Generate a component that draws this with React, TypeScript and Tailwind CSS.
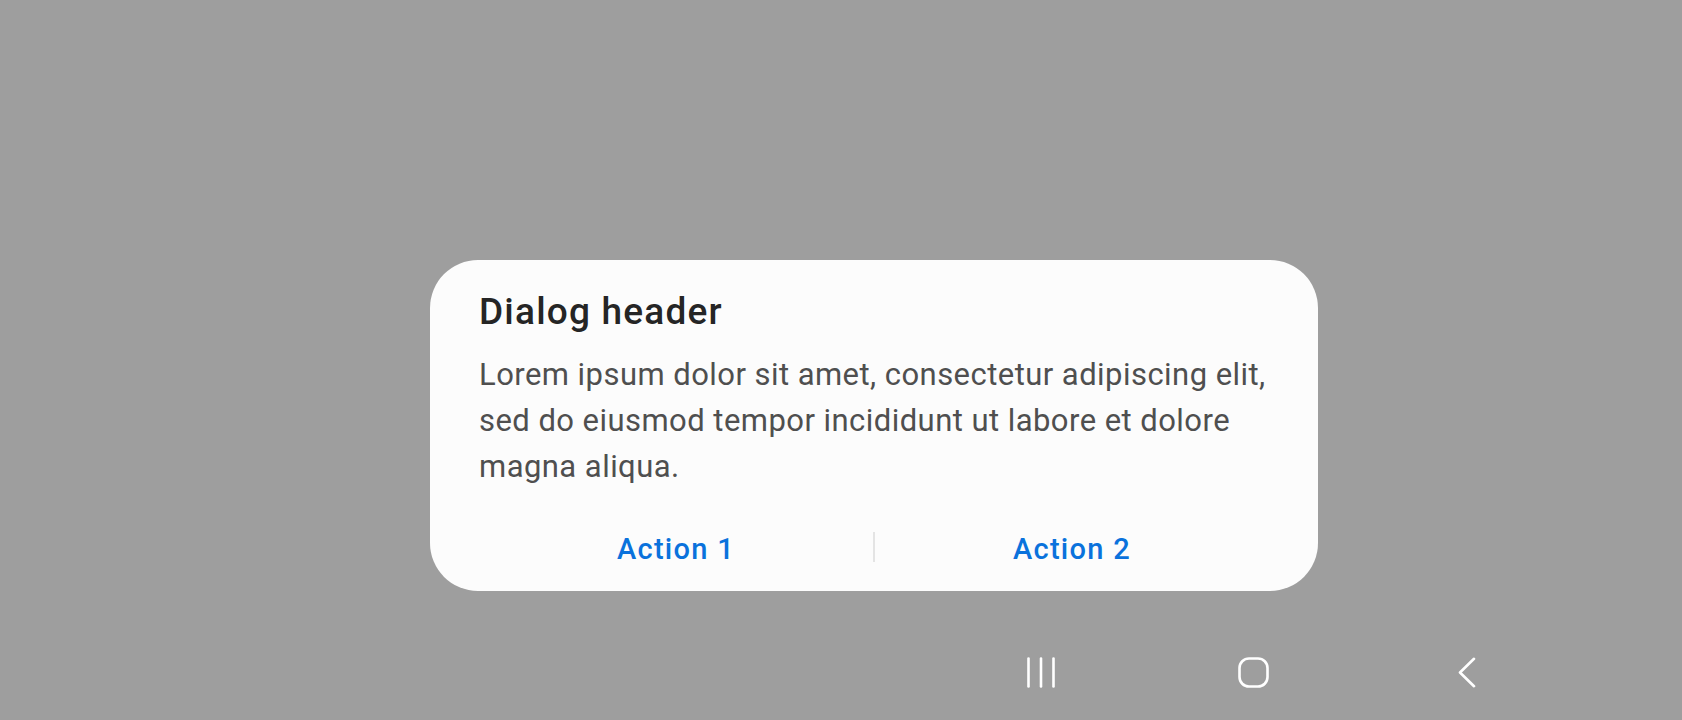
import React from "react";

function RecentsIcon() {
  return (
    <svg width="30" height="31" viewBox="0 0 30 31" fill="none">
      <g stroke="#ffffff" strokeWidth="2.6" strokeLinecap="round">
        <line x1="2.5" y1="1.6" x2="2.5" y2="29.4" />
        <line x1="15" y1="1.6" x2="15" y2="29.4" />
        <line x1="27.5" y1="1.6" x2="27.5" y2="29.4" />
      </g>
    </svg>
  );
}

function HomeIcon() {
  return (
    <svg width="31" height="31" viewBox="0 0 31 31" fill="none">
      <rect x="1.5" y="1.5" width="28" height="28" rx="9.5" stroke="#ffffff" strokeWidth="2.6" />
    </svg>
  );
}

function BackIcon() {
  return (
    <svg width="18" height="31" viewBox="0 0 18 31" fill="none">
      <polyline
        points="16,1.8 2,15.5 16,29.2"
        stroke="#ffffff"
        strokeWidth="2.6"
        strokeLinecap="round"
        strokeLinejoin="round"
      />
    </svg>
  );
}

export default function App() {
  return (
    <div
      className="flex h-[720px] w-full flex-col bg-[#9e9e9e]"
      style={{ fontFamily: "Roboto, 'Noto Sans', 'Liberation Sans', sans-serif" }}
    >
      <div className="pl-[430px] pt-[260px]">
        <div className="flex h-[331px] w-[888px] flex-col rounded-[48px] bg-[#fcfcfc] px-[49px] pt-[30px] pb-[9px]">
          <h1 className="text-[37px] font-medium leading-[44px] tracking-[1.2px] text-[#252525]">Dialog header</h1>
          <p className="mt-[18px] text-[31px] leading-[46px] tracking-[0.45px] text-[#4f4f4f]">
            Lorem ipsum dolor sit amet, consectetur adipiscing elit, sed do eiusmod tempor incididunt ut labore et dolore magna aliqua.
          </p>
          <div className="mt-auto flex h-[64px] items-center">
            <button className="flex-1 text-center text-[29px] font-medium tracking-[1.3px] text-[#0a72dc]">Action 1</button>
            <div className="mb-[6px] h-[30px] w-[2px] bg-[#e4e4e4]" />
            <button className="flex-1 text-center text-[29px] font-medium tracking-[1.3px] text-[#0a72dc]">Action 2</button>
          </div>
        </div>
      </div>
      <div className="mt-auto flex h-[96px] items-center pl-[934px]">
        <div className="flex w-[213px] justify-center">
          <RecentsIcon />
        </div>
        <div className="flex w-[213px] justify-center">
          <HomeIcon />
        </div>
        <div className="flex w-[213px] justify-center">
          <BackIcon />
        </div>
      </div>
    </div>
  );
}
